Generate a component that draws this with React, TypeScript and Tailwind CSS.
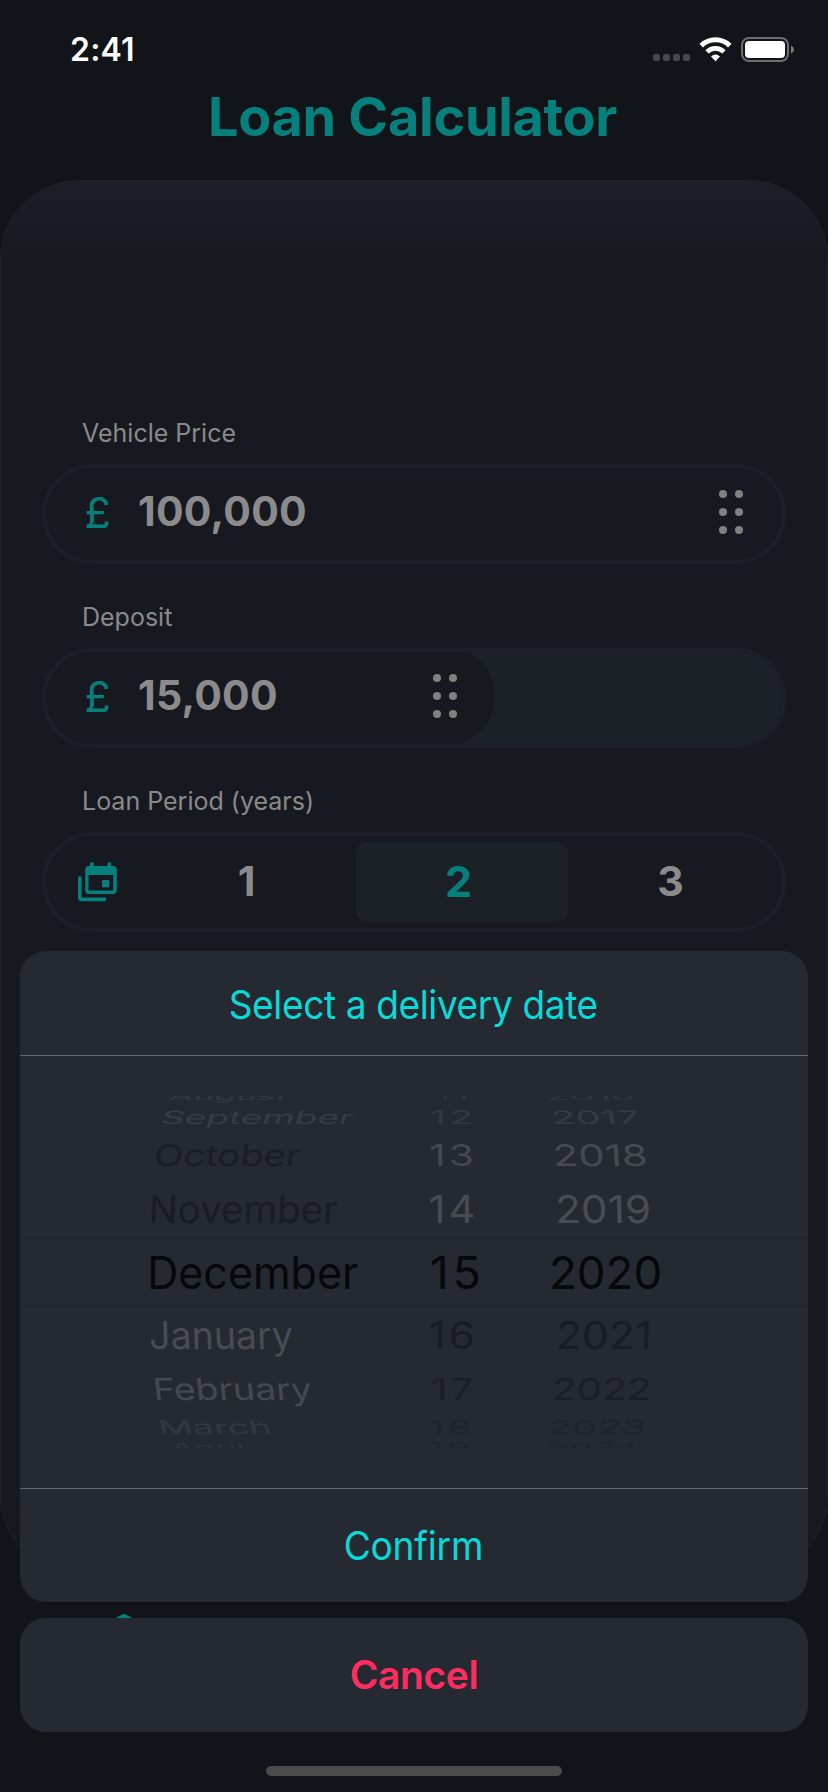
import type { ReactNode } from "react";

type Glyphs = {
  text: string;
  dx: number;
  sx: number;
  skew: number;
  color: string;
};

type WheelRow = {
  height: number;
  sy: number;
  month: Glyphs;
  day: Glyphs;
  year: Glyphs;
};

const g = (text: string, dx: number, sx: number, skew: number, color: string): Glyphs => ({
  text,
  dx,
  sx,
  skew,
  color,
});

const wheelRows: WheelRow[] = [
  {
    height: 3.5,
    sy: 0.25,
    month: g("August", 19.3, 0.787, -30, "#353841"),
    day: g("11", 6.5, 0.855, -4, "#31343d"),
    year: g("2016", -2.2, 0.887, 14, "#32353e"),
  },
  {
    height: 24.5,
    sy: 0.41,
    month: g("September", 11.2, 0.823, -18, "#383b44"),
    day: g("12", 2, 0.87, 0, "#353841"),
    year: g("2017", 4.2, 0.886, 9, "#363a43"),
  },
  {
    height: 42.3,
    sy: 0.66,
    month: g("October", 5.1, 0.849, -7, "#1b1d24"),
    day: g("13", 1, 0.907, 0, "#45484f"),
    year: g("2018", 5.5, 0.93, 4, "#464950"),
  },
  {
    height: 57,
    sy: 0.85,
    month: g("November", 0.3, 0.856, -2, "#1a1c23"),
    day: g("14", 0.4, 0.92, 0, "#484b52"),
    year: g("2019", 7.6, 0.939, 1.5, "#494c53"),
  },
  {
    height: 65.7,
    sy: 1,
    month: g("December", -0.7, 0.955, 0, "#06080a"),
    day: g("15", 1.7, 1.04, 0, "#06080a"),
    year: g("2020", 0.9, 1.015, 0, "#06080a"),
  },
  {
    height: 59.7,
    sy: 0.85,
    month: g("January", 1.5, 0.834, 2, "#494c53"),
    day: g("16", 0.4, 0.935, 0, "#1a1c23"),
    year: g("2021", 7.6, 0.944, -1.5, "#1a1c23"),
  },
  {
    height: 51.3,
    sy: 0.67,
    month: g("February", 6, 0.835, 6, "#45484f"),
    day: g("17", 3, 0.9, 0, "#1c1e26"),
    year: g("2022", 3, 0.9, -4, "#1c1e26"),
  },
  {
    height: 34,
    sy: 0.42,
    month: g("March", 12, 0.839, 14, "#343740"),
    day: g("18", -0.2, 0.9, 0, "#20232b"),
    year: g("2023", -1.2, 0.885, -9, "#20232b"),
  },
  {
    height: 17.5,
    sy: 0.25,
    month: g("April", 25, 0.753, 28, "#31343d"),
    day: g("19", 0.6, 0.84, 0, "#20232b"),
    year: g("2024", -2, 0.81, -14, "#20232b"),
  },
];

function WheelText({ item, sy, spaced }: { item: Glyphs; sy: number; spaced?: boolean }) {
  return (
    <span
      className={
        "-mb-[6px] block h-[45px] shrink-0 origin-[0_39px] whitespace-nowrap text-[45px] leading-[45px] " +
        (spaced ? "tracking-[3.5px]" : "")
      }
      style={{
        color: item.color,
        transform: `translateX(${item.dx}px) skewX(${item.skew}deg) scale(${item.sx}, ${sy})`,
      }}
    >
      {item.text}
    </span>
  );
}

function DateWheel() {
  return (
    <div className="relative h-[432px] pt-10">
      <div className="h-[352px] overflow-hidden">
        {wheelRows.map((row) => (
          <div
            key={row.month.text}
            className="grid grid-cols-[280px_120px_1fr] grid-rows-[minmax(0,1fr)] pl-32"
            style={{ height: row.height }}
          >
            {([row.month, row.day, row.year] as Glyphs[]).map((item, i) => (
              <div key={item.text} className="flex h-full min-h-0 items-end">
                <WheelText item={item} sy={row.sy} spaced={i === 1} />
              </div>
            ))}
          </div>
        ))}
      </div>
      <div className="pointer-events-none absolute inset-x-0 top-[181px] h-[70px] border-y border-[#1e2128]" />
    </div>
  );
}

function StatusBar() {
  return (
    <div className="flex h-[99px] items-center justify-between pl-[70px] pr-[34px]">
      <span className="text-[32px] font-semibold leading-none tracking-[0.2px] text-white">2:41</span>
      <div className="flex items-center">
        <div className="mt-4 flex gap-[3px]">
          {[0, 1, 2, 3].map((n) => (
            <span key={n} className="h-[7px] w-[7px] rounded-[2px] bg-[#47484c]" />
          ))}
        </div>
        <svg className="ml-[9px] h-[25px] w-[33px]" viewBox="0 0 33 25" fill="none">
          <path d="M2.2 8.6A20.5 20.5 0 0 1 30.8 8.6" stroke="#fff" strokeWidth="5" />
          <path d="M8 14.9A12 12 0 0 1 25 14.9" stroke="#fff" strokeWidth="4.8" />
          <path d="M12 19.4Q16.5 15.7 21 19.4L16.5 24.2Z" fill="#fff" />
        </svg>
        <svg className="ml-[9px] h-[25px] w-[53px]" viewBox="0 0 53 25" fill="none">
          <rect x="1" y="1" width="46" height="23" rx="7" stroke="#6c6e71" strokeWidth="2" />
          <rect x="4" y="4" width="40" height="17" rx="4" fill="#fff" />
          <path d="M50 8.5Q53 9.8 53 12.5T50 16.5Z" fill="#7b7d80" />
        </svg>
      </div>
    </div>
  );
}

function Field({ label, children }: { label: string; children: ReactNode }) {
  return (
    <section>
      <h2 className="mb-4 h-[30px] pl-[40px] text-[25px] leading-[30px] text-[#8a8a8b]">
        {label}
      </h2>
      <div className="relative h-[100px] overflow-hidden rounded-full border-4 border-[#1c1f27]">
        {children}
      </div>
    </section>
  );
}

function Grip() {
  return (
    <div className="mb-1 ml-auto grid grid-cols-[8px_8px] gap-x-2 gap-y-[10px]">
      {[0, 1, 2, 3, 4, 5].map((n) => (
        <span key={n} className="h-2 w-2 rounded-full bg-[#828283]" />
      ))}
    </div>
  );
}

function Amount({ value }: { value: string }) {
  return (
    <>
      <span className="w-[53.5px] pb-[3px] text-[43px] leading-none text-[#05807d]">£</span>
      <span className="pb-[6px] text-[41px] font-bold leading-none tracking-[0.25px] text-[#8b8b8b]">
        {value}
      </span>
    </>
  );
}

function CalendarStack() {
  return (
    <svg className="h-10 w-10" viewBox="0 0 40 40" fill="#05807d">
      <path d="M0 14.5H3.6V35.6H28V39.3H4Q0 39.3 0 35.4Z" />
      <path
        fillRule="evenodd"
        d="M12 0.6H15.6V4H29.6V0.6H33.2V4H35Q38.8 4 38.8 7.8V28.3Q38.8 32 35 32H11Q7.2 32 7.2 28.3V7.8Q7.2 4 11 4H12ZM10.5 13V28.6H35.2V13Z"
      />
      <path d="M24 18H31.3V25.3H24Z" />
    </svg>
  );
}

export default function App() {
  return (
    <div className="relative h-[1792px] w-[828px] overflow-hidden bg-[#111418] font-['Inter',sans-serif]">
      <StatusBar />
      <h1 className="mb-[46px] flex h-[35px] items-center justify-center pr-[3px] text-[54px] font-bold leading-none tracking-[-0.3px] text-[#05807d]">
        Loan Calculator
      </h1>

      <main className="flex h-[1395px] flex-col gap-[38px] rounded-[80px] border border-[#20232a] bg-[linear-gradient(to_bottom,#1c1f28_0px,#171a21_60px,#171920_90px,#171920_1315px,#15181b_1395px)] px-[41px] pt-[237px]">
        <Field label="Vehicle Price">
          <div className="flex h-full items-center pl-[38.5px] pr-[39px]">
            <Amount value="100,000" />
            <Grip />
          </div>
        </Field>

        <Field label="Deposit">
          <div className="absolute -top-[6px] left-0 h-[100px] w-[736px] rounded-[49px] bg-[#1c2027]" />
          <div className="absolute -top-[6px] left-0 h-[100px] w-[449px] rounded-[50px] bg-[#171920]" />
          <div className="relative flex h-full w-[449px] items-center pl-[38.5px] pr-[38px]">
            <Amount value="15,000" />
            <Grip />
          </div>
        </Field>

        <Field label="Loan Period (years)">
          <div className="flex h-full items-center pl-8">
            <CalendarStack />
            <div className="ml-[26px] flex text-[41px] font-bold leading-none text-[#8b8b8b]">
              <span className="flex h-20 w-[212px] items-center justify-center pb-0.5 pr-[7px]">1</span>
              <span className="flex h-20 w-[212px] items-center justify-center rounded-[10px] bg-[#1c2027] pb-0.5 pr-[7px] text-[43px] text-[#05807d]">
                2
              </span>
              <span className="flex h-20 w-[212px] items-center justify-center pb-0.5 pr-[7px]">3</span>
            </div>
          </div>
        </Field>
      </main>

      <svg className="ml-[116px] mt-[38px] h-5 w-4" viewBox="0 0 16 20" fill="#05807d">
        <path d="M0 4.8L6.8 1.3Q8 0.7 9.2 1.3L16 4.8V20H0Z" />
      </svg>

      <div className="absolute inset-x-5 top-[951px] flex flex-col gap-4">
        <div className="h-[651px] rounded-[26px] bg-[#252932]">
          <h3 className="flex h-[105px] items-center justify-center border-b border-[#63666d] pr-[1px] pt-[3px] text-[39px] leading-none tracking-[-0.4px] text-[#08dbd7]">
            <span className="block scale-x-[0.95] whitespace-nowrap">Select a delivery date</span>
          </h3>
          <DateWheel />
          <button className="flex h-[114px] w-full items-center justify-center border-t border-[#63666d] pr-[2px] text-[39px] leading-none tracking-[-0.2px] text-[#08dbd7]">
            <span className="block scale-x-[0.95]">Confirm</span>
          </button>
        </div>
        <button className="flex h-[114px] items-center justify-center rounded-[26px] bg-[#252932] pb-0.5 text-[39px] font-semibold leading-none tracking-[-0.4px] text-[#ff2d5f]">
          Cancel
        </button>
      </div>

      <div className="absolute bottom-4 left-[266px] h-[10px] w-[296px] rounded-full bg-[#4b4b4b]" />
    </div>
  );
}
